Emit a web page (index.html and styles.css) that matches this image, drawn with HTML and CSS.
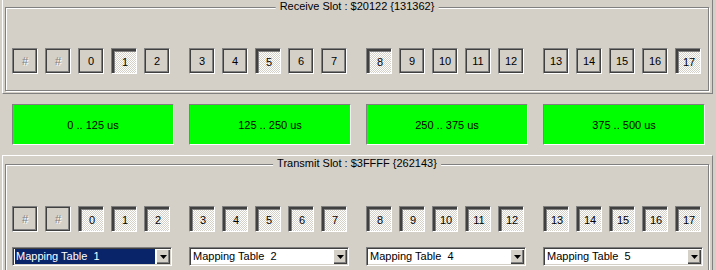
FILE: index.html
```html
<!DOCTYPE html>
<html lang="en">
<head>
  <meta charset="UTF-8">
  <title>Slot Monitor</title>
  <link rel="stylesheet" href="styles.css">
</head>
<body>
  <!-- Receive -->
  <div class="panel panel-top">
    <div class="group">
      <span class="group-title">Receive Slot : $20122 {131362}</span>
      <div class="slot-grid">
        <div class="slot-set">
          <span class="slot off">#</span><span class="slot off">#</span><span class="slot">0</span><span class="slot on">1</span><span class="slot">2</span>
        </div>
        <div class="slot-set">
          <span class="slot">3</span><span class="slot">4</span><span class="slot on">5</span><span class="slot">6</span><span class="slot">7</span>
        </div>
        <div class="slot-set">
          <span class="slot on">8</span><span class="slot">9</span><span class="slot">10</span><span class="slot">11</span><span class="slot">12</span>
        </div>
        <div class="slot-set">
          <span class="slot">13</span><span class="slot">14</span><span class="slot">15</span><span class="slot">16</span><span class="slot on">17</span>
        </div>
      </div>
    </div>
  </div>

  <!-- Time windows -->
  <div class="time-row">
    <div class="time-bar">0 .. 125 us</div>
    <div class="time-bar">125 .. 250 us</div>
    <div class="time-bar">250 .. 375 us</div>
    <div class="time-bar">375 .. 500 us</div>
  </div>

  <!-- Transmit -->
  <div class="panel">
    <div class="group group-tx">
      <span class="group-title">Transmit Slot : $3FFFF {262143}</span>
      <div class="slot-grid">
        <div class="slot-set">
          <span class="slot off">#</span><span class="slot off">#</span><span class="slot on">0</span><span class="slot on">1</span><span class="slot on">2</span>
        </div>
        <div class="slot-set">
          <span class="slot on">3</span><span class="slot on">4</span><span class="slot on">5</span><span class="slot on">6</span><span class="slot on">7</span>
        </div>
        <div class="slot-set">
          <span class="slot on">8</span><span class="slot on">9</span><span class="slot on">10</span><span class="slot on">11</span><span class="slot on">12</span>
        </div>
        <div class="slot-set">
          <span class="slot on">13</span><span class="slot on">14</span><span class="slot on">15</span><span class="slot on">16</span><span class="slot on">17</span>
        </div>
      </div>
      <div class="slot-grid combo-grid">
        <div class="combo selected">
          <span class="combo-text">Mapping Table  1</span>
          <span class="combo-btn"><svg width="7" height="4" viewBox="0 0 7 4"><polygon points="0,0 7,0 3.5,4" fill="#000"/></svg></span>
        </div>
        <div class="combo">
          <span class="combo-text">Mapping Table  2</span>
          <span class="combo-btn"><svg width="7" height="4" viewBox="0 0 7 4"><polygon points="0,0 7,0 3.5,4" fill="#000"/></svg></span>
        </div>
        <div class="combo">
          <span class="combo-text">Mapping Table  4</span>
          <span class="combo-btn"><svg width="7" height="4" viewBox="0 0 7 4"><polygon points="0,0 7,0 3.5,4" fill="#000"/></svg></span>
        </div>
        <div class="combo">
          <span class="combo-text">Mapping Table  5</span>
          <span class="combo-btn"><svg width="7" height="4" viewBox="0 0 7 4"><polygon points="0,0 7,0 3.5,4" fill="#000"/></svg></span>
        </div>
      </div>
    </div>
  </div>
</body>
</html>
```

FILE: styles.css
```css
/* classic dialog colours */
:root {
  --face: #d4d0c8;
  --shadow: #808080;
  --dark: #404040;
  --light: #ffffff;
}

body {
  margin: 0;
  width: 716px;
  height: 270px;
  overflow: hidden;
  background: var(--face);
  font-family: "Liberation Sans", Arial, sans-serif;
  font-size: 11px;
  color: #000;
}

/* raised outer panel */
.panel {
  box-sizing: border-box;
  width: 711px;
  margin-left: 2px;
  padding: 8px 3px 2px 2px;
  border: 1px solid;
  border-color: var(--light) var(--shadow) var(--shadow) var(--light);
}

.panel-top {
  margin-top: -2px;
}

/* etched group box */
.group {
  position: relative;
  border: 1px solid var(--shadow);
  box-shadow: 1px 1px 0 var(--light), inset 1px 1px 0 var(--light);
  padding: 40px 0 16px 6px;
}

.group-tx {
  padding-top: 41px;
  height: 120px;
}

.group-title {
  position: absolute;
  top: -8px;
  left: 50%;
  transform: translateX(-50%);
  padding: 0 4px;
  background: var(--face);
  line-height: 13px;
  white-space: nowrap;
}

.slot-grid {
  display: grid;
  grid-template-columns: repeat(4, 177px);
}

.slot-set {
  display: flex;
  gap: 7px;
}

/* toggle buttons */
.slot {
  box-sizing: border-box;
  width: 26px;
  height: 26px;
  display: flex;
  align-items: center;
  justify-content: center;
  border: 1px solid;
  border-color: var(--shadow) var(--light) var(--light) var(--shadow);
  box-shadow: inset 1px 1px 0 var(--dark), inset -1px -1px 0 var(--dark), inset -2px -2px 0 var(--shadow);
  background: var(--face);
  line-height: 1;
}

.slot.off {
  color: var(--shadow);
  text-shadow: 1px 1px 0 var(--light);
}

.slot.on {
  box-shadow: inset 2px 2px 0 var(--dark), inset 3px 3px 0 var(--shadow);
  background-color: var(--light);
  background-image: conic-gradient(var(--face) 25%, var(--light) 0 50%, var(--face) 0 75%, var(--light) 0);
  background-size: 2px 2px;
  padding: 2px 0 0 2px;
}

/* time windows */
.time-row {
  display: flex;
  gap: 15px;
  margin: 10px 0 10px 12px;
}

.time-bar {
  box-sizing: border-box;
  width: 162px;
  height: 41px;
  display: flex;
  align-items: center;
  justify-content: center;
  background: #00ff00;
  border: 1px solid;
  border-color: var(--shadow) var(--light) var(--light) var(--shadow);
}

/* drop-down lists */
.combo-grid {
  margin-top: 15px;
}

.combo {
  box-sizing: border-box;
  width: 160px;
  height: 19px;
  display: flex;
  padding: 1px;
  border: 1px solid;
  border-color: var(--shadow) var(--light) var(--light) var(--shadow);
  box-shadow: inset 1px 1px 0 var(--dark), inset -1px -1px 0 var(--face);
  background: var(--light);
}

.combo-text {
  flex: 1;
  margin: 0 1px 0 1px;
  padding-left: 1px;
  line-height: 15px;
  white-space: pre;
}

.combo.selected .combo-text {
  background: #0a246a;
  color: var(--light);
}

.combo-btn {
  box-sizing: border-box;
  width: 14px;
  display: flex;
  align-items: center;
  justify-content: center;
  background: var(--face);
  box-shadow: inset 1px 1px 0 var(--light), inset -1px -1px 0 var(--dark), inset -2px -2px 0 var(--shadow);
}
```
